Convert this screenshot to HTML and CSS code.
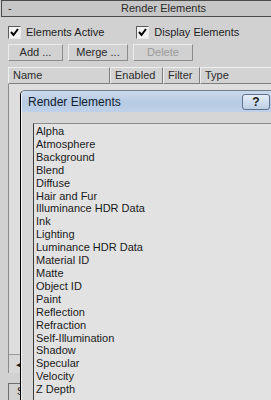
FILE: index.html
```html
<!DOCTYPE html>
<html lang="en">
<head>
	<meta charset="UTF-8">
	<title>Render Elements</title>
	<link rel="stylesheet" href="styles.css">
</head>
<body>
	<div class="rollout">
		<div class="rollout-head">
			<span class="minus">-</span>
			<span class="rollout-title">Render Elements</span>
		</div>
		<div class="checks">
			<label class="check">
				<span class="box"><svg width="11" height="11" viewBox="0 0 11 11"><path d="M2 5 L4.5 8 L9 2" fill="none" stroke="#000" stroke-width="2"/></svg></span>
				Elements Active
			</label>
			<label class="check">
				<span class="box"><svg width="11" height="11" viewBox="0 0 11 11"><path d="M2 5 L4.5 8 L9 2" fill="none" stroke="#000" stroke-width="2"/></svg></span>
				Display Elements
			</label>
		</div>
		<div class="buttons">
			<div class="btn btn-add">Add ...</div>
			<div class="btn btn-merge">Merge ...</div>
			<div class="btn btn-delete disabled">Delete</div>
		</div>
		<div class="table">
			<div class="thead">
				<div class="th th-name">Name</div>
				<div class="th th-enabled">Enabled</div>
				<div class="th th-filter">Filter</div>
				<div class="th th-type">Type</div>
			</div>
			<div class="tbody">
				<div class="hscroll"><span class="arrow">&#9664;</span></div>
			</div>
		</div>
		<div class="below">
			<div class="sbtn">S</div>
		</div>
	</div>

	<div class="dialog">
		<div class="dialog-title">
			<span>Render Elements</span>
			<span class="help">?</span>
		</div>
		<div class="dialog-body">
			<ul class="list">
				<li>Alpha</li>
				<li>Atmosphere</li>
				<li>Background</li>
				<li>Blend</li>
				<li>Diffuse</li>
				<li>Hair and Fur</li>
				<li>Illuminance HDR Data</li>
				<li>Ink</li>
				<li>Lighting</li>
				<li>Luminance HDR Data</li>
				<li>Material ID</li>
				<li>Matte</li>
				<li>Object ID</li>
				<li>Paint</li>
				<li>Reflection</li>
				<li>Refraction</li>
				<li>Self-Illumination</li>
				<li>Shadow</li>
				<li>Specular</li>
				<li>Velocity</li>
				<li>Z Depth</li>
			</ul>
		</div>
	</div>
</body>
</html>
```

FILE: styles.css
```css
html, body {
	margin: 0;
	padding: 0;
	height: 100%;
}
body {
	background-color: #d1d1d1;
	font-family: "Liberation Sans", Arial, sans-serif;
	font-size: 11px;
	color: #1e1e1e;
	overflow: hidden;
	position: relative;
}

/* rollout */
.rollout-head {
	height: 15px;
	width: 330px;
	margin-left: 1px;
	border: 1px solid #4a4a4a;
	background-color: #c6c6c6;
	display: flex;
	align-items: center;
	line-height: 15px;
	font-size: 11px;
}
.minus {
	width: 20px;
	padding-left: 6px;
}
.rollout-title {
	padding-left: 93px;
	color: #2a2a2a;
}

.checks {
	display: flex;
	margin: 9px 0 0 8px;
	height: 13px;
}
.check {
	display: flex;
	align-items: center;
	gap: 5px;
	line-height: 13px;
}
.check + .check {
	margin-left: 32px;
}
.box {
	width: 11px;
	height: 11px;
	border: 1px solid;
	border-color: #5a5a5a #e8e8e8 #e8e8e8 #5a5a5a;
	background-color: #f2f2f2;
	display: flex;
}

.buttons {
	display: flex;
	gap: 5px;
	margin: 5px 0 0 8px;
}
.btn {
	height: 15px;
	line-height: 15px;
	text-align: center;
	border: 1px solid;
	border-color: #ececec #8c8c8c #8c8c8c #ececec;
	background-color: #d1d1d1;
	color: #2a2a2a;
}
.btn-add { width: 53px; }
.btn-merge { width: 58px; }
.btn-delete { width: 58px; }
.btn.disabled { color: #9a9a9a; }

.table {
	margin: 6px 0 0 8px;
}
.thead {
	display: flex;
	height: 17px;
	width: 330px;
}
.th {
	box-sizing: border-box;
	height: 17px;
	line-height: 15px;
	padding-left: 4px;
	border: 1px solid;
	border-color: #efefef #7e7e7e #7e7e7e #efefef;
	background-color: #d3d3d3;
	color: #2c2c2c;
}
.th-name { width: 102px; }
.th-enabled { width: 53px; }
.th-filter { width: 37px; }
.th-type { width: 138px; }

.tbody {
	height: 289px;
	border-left: 1px solid #8a8a8a;
	background-color: #dedede;
	display: flex;
	flex-direction: column;
	justify-content: flex-end;
}
.hscroll {
	height: 18px;
	border-top: 1px solid #9a9a9a;
	background-color: #d8d8d8;
	position: relative;
}
.arrow {
	position: absolute;
	left: 7px;
	top: 6px;
	font-size: 7px;
	color: #222;
}

.below {
	padding: 10px 0 0 8px;
}
.sbtn {
	width: 20px;
	height: 20px;
	border: 1px solid;
	border-color: #6e6e6e #eaeaea #eaeaea #6e6e6e;
	padding-left: 8px;
	line-height: 14px;
	color: #222;
}

/* dialog window on top */
.dialog {
	position: absolute;
	left: 20px;
	top: 90px;
	width: 252px;
	height: 340px;
	border-left: 1px solid #000;
	border-top: 1px solid #707c8c;
	border-top-left-radius: 5px;
	background-color: #d6d6d6;
	overflow: hidden;
}
.dialog-title {
	height: 21px;
	display: flex;
	align-items: center;
	justify-content: space-between;
	padding-left: 6px;
	background: linear-gradient(#cbdaed, #b6cae3 55%, #bfd1e8);
	font-size: 12px;
	color: #101c30;
	border-left: 1px solid #eef3f9;
}
.help {
	width: 26px;
	height: 14px;
	margin-right: 3px;
	border: 1px solid #5f7391;
	border-radius: 3px;
	background: linear-gradient(#e6eef8, #bccee5);
	text-align: center;
	line-height: 14px;
	font-size: 12px;
	font-weight: bold;
	color: #1a1a1a;
}
.dialog-body {
	padding: 11px 0 0 11px;
	border-left: 1px solid #f2f2f2;
}
.list {
	list-style: none;
	margin: 0;
	padding: 1px 0 0 2px;
	height: 300px;
	border-top: 1px solid #8c8c8c;
	border-left: 1px solid #3c3c3c;
	background-color: #e2e2e2;
}
.list li {
	line-height: 12.9px;
	color: #1a1a1a;
}
```
